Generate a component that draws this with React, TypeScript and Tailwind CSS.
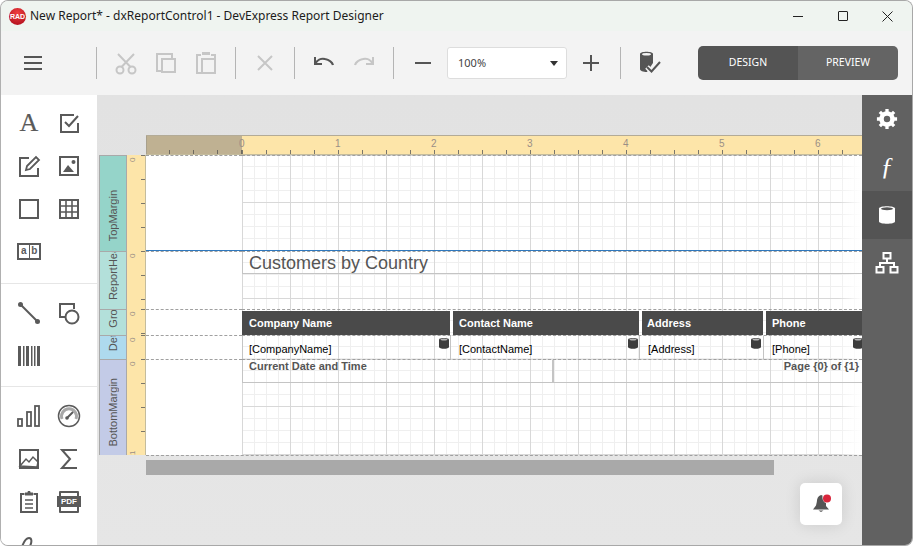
import React from 'react';

const grid =
  'bg-[linear-gradient(270deg,#ffffff,transparent_24px),repeating-linear-gradient(90deg,#d8d8d8_0,#d8d8d8_1px,transparent_1px,transparent_48px),repeating-linear-gradient(180deg,transparent_0,transparent_46px,#d8d8d8_46px,#d8d8d8_47px,transparent_47px,transparent_48px),repeating-linear-gradient(90deg,#efefef_0,#efefef_1px,transparent_1px,transparent_12px),repeating-linear-gradient(180deg,transparent_0,transparent_10px,#efefef_10px,#efefef_11px,transparent_11px,transparent_12px)]';

const Icon: React.FC<{ size?: number; className?: string; children: React.ReactNode }> = ({ size = 24, className = '', children }) => (
  <svg width={size} height={size} viewBox="0 0 24 24" fill="none" stroke="currentColor" strokeWidth={2} className={className}>
    {children}
  </svg>
);

const Sep = () => <div className="w-px h-8 bg-[#b4b4b4] mx-[9px] shrink-0" />;

const ToolBtn: React.FC<{ disabled?: boolean; children: React.ReactNode }> = ({ disabled, children }) => (
  <button className={`w-10 h-10 flex items-center justify-center shrink-0 ${disabled ? 'text-[#c6c6c6]' : 'text-[#555555]'}`}>
    {children}
  </button>
);

const Cell: React.FC<{ children?: React.ReactNode }> = ({ children }) => (
  <div className="w-10 h-[43px] flex items-center justify-center text-[#5a5a5a]">{children}</div>
);

const Db: React.FC<{ className?: string }> = ({ className = '' }) => (
  <svg width="10" height="12" viewBox="0 0 10 12" className={className}>
    <path d="M0 2.5C0 .5 10 .5 10 2.5V10C10 12.4 0 12.4 0 10Z" fill="#3d3d3d" />
    <ellipse cx="5" cy="2.6" rx="3.4" ry="1" fill="#b5b5b5" />
  </svg>
);

const bands = [
  { name: 'TopMargin', h: 'h-[96px]', bg: 'bg-[#95d4c9]', pb: 'pb-[10px]' },
  { name: 'ReportHeader', h: 'h-[58px]', bg: 'bg-[#b3e0da]', pb: 'pb-[9px]' },
  { name: 'GroupHeader', h: 'h-[26px]', bg: 'bg-[#b3e0da]', pb: 'pb-[7px]' },
  { name: 'Detail', h: 'h-[24px]', bg: 'bg-[#aedaee]', pb: 'pb-[8px]' },
  { name: 'BottomMargin', h: 'h-[96px]', bg: 'bg-[#c3cbe7]', pb: 'pb-[9px]' },
];

const BandContent: React.FC<{ name: string }> = ({ name }) => {
  if (name === 'ReportHeader') {
    return (
      <div className="h-[22px] border-b border-[#c4c4c4] border-l pl-[6px] text-[18px] leading-[22px] text-[#555555]">
        Customers by Country
      </div>
    );
  }
  if (name === 'GroupHeader') {
    return (
      <div className="flex gap-[3px] h-[24px] mt-px text-white font-bold text-[11px] leading-[24px]">
        <div className="w-[208px] pl-[7px] bg-[#4a4a4a]">Company Name</div>
        <div className="w-[186px] pl-[6px] bg-[#4a4a4a]">Contact Name</div>
        <div className="w-[121px] pl-[5px] bg-[#4a4a4a]">Address</div>
        <div className="flex-1 pl-[6px] bg-[#4a4a4a]">Phone</div>
      </div>
    );
  }
  if (name === 'Detail') {
    return (
      <div className="flex h-[24px] text-black text-[11px] leading-[13px]">
        <div className="relative w-[209px] pl-[6px] pt-[7px] border-l border-r border-[#c4c4c4]">
          [CompanyName]
          <Db className="absolute right-[1px] top-[1px]" />
        </div>
        <div className="relative w-[189px] pl-[8px] pt-[7px] border-r border-[#c4c4c4]">
          [ContactName]
          <Db className="absolute right-[1px] top-[1px]" />
        </div>
        <div className="relative w-[124px] pl-[8px] pt-[7px] border-r border-[#c4c4c4]">
          [Address]
          <Db className="absolute right-[2px] top-[1px]" />
        </div>
        <div className="relative flex-1 pl-[8px] pt-[7px] overflow-hidden">
          [Phone]
          <Db className="absolute -right-[1px] top-[1px]" />
        </div>
      </div>
    );
  }
  if (name === 'BottomMargin') {
    return (
      <div className="flex h-[23px] border-b border-[#c4c4c4] text-[#555555] font-bold text-[11px] leading-[12px]">
        <div className="w-[312px] pl-[6px] border-l border-[#c4c4c4] border-r-2 border-r-[#c4c4c4]">Current Date and Time</div>
        <div className="flex-1 text-right pr-[3px]">Page {'{0}'} of {'{1}'}</div>
      </div>
    );
  }
  return null;
};

export default function App() {
  return (
    <div className="w-[913px] h-[546px] overflow-hidden rounded-lg border border-[#a8a8a8] border-l-[#b0b0b0] flex flex-col bg-[#f3f3f3] font-['Liberation_Sans',sans-serif]">
      {/* Title bar */}
      <div className="h-[30px] shrink-0 flex items-center bg-[#eff4f0]">
        <div className="ml-2 w-[17px] h-[17px] rounded-full bg-[radial-gradient(circle_at_50%_30%,#f04040,#a80818)] flex items-center justify-center text-white font-bold text-[7px] leading-none">
          RAD
        </div>
        <span className="ml-[4px] font-['Noto_Sans',sans-serif] text-[12px] text-[#1c1c1c]">
          New Report* - dxReportControl1 - DevExpress Report Designer
        </span>
        <div className="ml-auto mr-[2px] flex text-[#222222]">
          <div className="w-[45px] h-[30px] flex items-center justify-center"><div className="w-[10px] h-px bg-[#222222]" /></div>
          <div className="w-[45px] h-[30px] flex items-center justify-center"><div className="w-[10px] h-[10px] border border-[#222222] rounded-[1px]" /></div>
          <div className="w-[45px] h-[30px] flex items-center justify-center">
            <svg width="11" height="11" viewBox="0 0 11 11" stroke="currentColor"><path d="M.5.5l10 10M10.500.5l-10 10" /></svg>
          </div>
        </div>
      </div>

      {/* Toolbar */}
      <div className="h-[64px] shrink-0 flex items-center bg-[#f3f3f3]">
        <div className="ml-3"><ToolBtn>
          <Icon><path d="M3 6h18M3 12h18M3 18h18" /></Icon>
        </ToolBtn></div>
        <div className="ml-[34px] flex items-center">
          <Sep />
          <ToolBtn disabled>
            <Icon>
              <circle cx="6" cy="19" r="3.500" /><circle cx="18" cy="19" r="3.500" />
              <path d="M4 3l12.500 13M20 3L7.500 16" />
            </Icon>
          </ToolBtn>
          <ToolBtn disabled>
            <Icon><path d="M8 20H3V3h15v5" /><rect x="8" y="8" width="13" height="13" /></Icon>
          </ToolBtn>
          <ToolBtn disabled>
            <Icon>
              <path d="M7 4H3v18h4M17 4h4v4" /><rect x="8" y="8" width="13" height="14" /><path d="M8 4h8V1H8z" fill="currentColor" stroke="none" />
            </Icon>
          </ToolBtn>
          <Sep />
          <ToolBtn disabled>
            <Icon><path d="M5 5l14 14M19 5L5 19" /></Icon>
          </ToolBtn>
          <Sep />
          <ToolBtn>
            <Icon size={24}><path d="M3 6v7h7" /><path d="M3 13c2-4 6-6 10-5 4 .8 7 3 8 6" strokeWidth={2.200} /></Icon>
          </ToolBtn>
          <ToolBtn disabled>
            <Icon size={24}><path d="M21 6v7h-7" /><path d="M21 13c-2-4-6-6-10-5-4 .8-7 3-8 6" strokeWidth={2.200} /></Icon>
          </ToolBtn>
          <Sep />
          <ToolBtn>
            <Icon><path d="M4 12h16" /></Icon>
          </ToolBtn>
          <div className="mx-1 w-[120px] h-8 shrink-0 flex items-center justify-between bg-white border border-[#dddddd] rounded-[3px] pl-[10px] pr-[8px] font-['Noto_Sans',sans-serif] text-[11px] text-[#444444]">
            100%
            <svg width="8" height="5" viewBox="0 0 8 5"><path d="M0 0h8L4 5z" fill="#333333" /></svg>
          </div>
          <ToolBtn>
            <Icon><path d="M4 12h16M12 4v16" /></Icon>
          </ToolBtn>
          <Sep />
          <ToolBtn>
            <svg width="26" height="26" viewBox="0 0 26 26">
              <path d="M3 4C3 1 16 1 16 4V13L10 22C6 22 3 21 3 19Z" fill="#555555" />
              <ellipse cx="9.500" cy="4.200" rx="4.500" ry="1.300" fill="#f3f3f3" />
              <path d="M10 17l4.500 4.500L23 12" fill="none" stroke="#f3f3f3" strokeWidth="5" />
              <path d="M10 17l4.500 4.500L23 12" fill="none" stroke="#555555" strokeWidth="2" />
            </svg>
          </ToolBtn>
          <div className="ml-7 flex h-[34px] w-[200px] rounded-[5px] overflow-hidden text-white text-[10.500px] font-['Noto_Sans',sans-serif]">
            <div className="w-[100px] bg-[#545454] flex items-center justify-center">DESIGN</div>
            <div className="w-[100px] bg-[#646464] flex items-center justify-center">PREVIEW</div>
          </div>
        </div>
      </div>

      {/* Main area */}
      <div className="flex-1 min-h-0 flex">
        {/* Toolbox */}
        <div className="w-[96px] shrink-0 bg-white flex flex-col overflow-hidden pt-[6px] pl-2 text-[#5a5a5a]">
          <div className="grid grid-cols-[40px_40px]">
            <Cell><span className="font-['Liberation_Serif',serif] text-[26px] leading-none [-webkit-text-stroke:0.2px_#5a5a5a]">A</span></Cell>
            <Cell>
              <Icon><path d="M21 12v9H4V4h13" /><path d="M8 11l4 4 9-10" /></Icon>
            </Cell>
            <Cell>
              <Icon>
                <path d="M12 4H3v18h18v-8" />
                <path d="M9 16l1-4 9-9 3 3-9 9z" strokeWidth={1.800} />
              </Icon>
            </Cell>
            <Cell>
              <Icon>
                <rect x="3" y="3" width="18" height="18" />
                <path d="M6 18l5-7 6 7z" fill="currentColor" stroke="none" />
                <circle cx="16.500" cy="8" r="2" fill="currentColor" stroke="none" />
              </Icon>
            </Cell>
            <Cell><Icon><rect x="3" y="3" width="18" height="18" /></Icon></Cell>
            <Cell>
              <Icon><rect x="3" y="3" width="18" height="18" /><path d="M9 3v18M15 3v18M3 9h18M3 15h18" strokeWidth={1.600} /></Icon>
            </Cell>
            <Cell>
              <div className="w-6 h-[17px] flex border-2 border-[#5a5a5a] text-[10px] leading-[12px] font-bold text-center">
                <span className="flex-1 border-r border-[#5a5a5a]">a</span>
                <span className="flex-1">b</span>
              </div>
            </Cell>
          </div>
          <div className="h-px bg-[#e6e6e6] -ml-2 mt-[10px] mb-[7px] shrink-0" />
          <div className="grid grid-cols-[40px_40px]">
            <Cell>
              <Icon><path d="M3 3l18 18" /><circle cx="3.500" cy="3.500" r="1.500" fill="currentColor" /><circle cx="20.500" cy="20.500" r="1.500" fill="currentColor" /></Icon>
            </Cell>
            <Cell>
              <Icon><path d="M8 16H3V3h14v5" /><circle cx="15" cy="16" r="6.500" /></Icon>
            </Cell>
            <Cell>
              <svg width="24" height="24" viewBox="0 0 24 24" fill="currentColor">
                <path d="M1 2h3v20H1zM6 2h1.500v20H6zM9 2h3v20H9zM14 2h1.500v20H14zM17 2h1.500v20H17zM20 2h3v20h-3z" />
              </svg>
            </Cell>
          </div>
          <div className="h-px bg-[#e6e6e6] -ml-2 mt-[9px] mb-[7px] shrink-0" />
          <div className="grid grid-cols-[40px_40px]">
            <Cell>
              <Icon>
                <rect x="1" y="15" width="4" height="7" strokeWidth={1.800} />
                <rect x="10" y="8" width="4" height="14" strokeWidth={1.800} />
                <rect x="18" y="2" width="4" height="20" strokeWidth={1.800} />
              </Icon>
            </Cell>
            <Cell>
              <Icon>
                <circle cx="12" cy="12" r="10.500" strokeWidth={1.500} />
                <path d="M5 15a7.500 7.500 0 1 1 14 0" strokeWidth={3} stroke="#a8a8a8" />
                <path d="M10 14l6-6" strokeWidth={2} />
                <circle cx="10" cy="14" r="1.800" fill="currentColor" stroke="none" />
              </Icon>
            </Cell>
            <Cell>
              <Icon><rect x="3" y="3" width="18" height="18" /><path d="M3 19l6-7 3 3 4-5 5 5-1 5z" strokeWidth={1.500} /></Icon>
            </Cell>
            <Cell>
              <Icon><path d="M20 3H5l8 9-8 9h15" /></Icon>
            </Cell>
            <Cell>
              <Icon>
                <path d="M7 4H4v18h16V4h-3" /><path d="M8 5V3h3V1.500h2V3h3v2z" fill="currentColor" strokeWidth={1} />
                <path d="M8 10h8M8 14h8M8 18h8" strokeWidth={1.600} />
              </Icon>
            </Cell>
            <Cell>
              <div className="relative w-[22px] h-[22px] flex items-center">
                <div className="absolute inset-x-[1px] inset-y-0 border-2 border-[#5a5a5a] rounded-[1px]" />
                <div className="relative -mx-[1px] w-6 h-[11px] bg-[#5a5a5a] text-white text-[8px] leading-[11px] font-bold text-center">PDF</div>
              </div>
            </Cell>
            <Cell>
              <Icon><path d="M3 26c0-9 4-21 9-21 3 0 3 4 1 8" /></Icon>
            </Cell>
          </div>
        </div>

        {/* Design surface */}
        <div className="relative flex-1 min-w-0 overflow-hidden bg-gradient-to-b from-[#e2e2e2] to-[#e6e6e6] pt-[40px] pl-[2px]">
          {/* Top ruler */}
          <div className="ml-[47px] flex h-[20px] w-[716px] border-t border-[#b3ab97] border-b border-b-[#c4bc9d]">
            <div className="relative w-[96px] bg-[#bfb192] shrink-0 border-l border-[#a8a08c]">
              <div className="absolute bottom-0 inset-x-0 h-[4px] bg-[repeating-linear-gradient(90deg,transparent_0,transparent_22px,#6e6a60_22px,#6e6a60_23px,transparent_23px,transparent_24px)]" />
            </div>
            <div className="relative flex-1 bg-[#fde5a9] flex">
              <div className="absolute bottom-0 inset-x-0 h-[4px] bg-[repeating-linear-gradient(90deg,#7a766a_0,#7a766a_1px,transparent_1px,transparent_24px)]" />
              {[0, 1, 2, 3, 4, 5, 6].map((n) => (
                <div key={n} className={`${n === 6 ? 'w-[44px]' : 'w-[96px]'} shrink-0 text-[10px] leading-[16px] text-[#9a8f86]`}>
                  <span className="-ml-[3px]">{n}</span>
                </div>
              ))}
            </div>
          </div>

          {/* Bands */}
          {bands.map((b) => (
            <div key={b.name} className={`flex w-[763px] ${b.h}`}>
              <div className={`w-[28px] shrink-0 border-x border-t border-[#a9a9a9] overflow-hidden flex justify-center items-end ${b.bg} ${b.pb}`}>
                <span className="[writing-mode:vertical-rl] rotate-180 text-[11px] leading-none text-[#555555] whitespace-nowrap">
                  {b.name}
                </span>
              </div>
              <div className="relative w-[19px] shrink-0 bg-[#fde5a9] border-r border-[#c4bc9d]">
                <div className="absolute right-0 top-0 bottom-0 w-[4px] bg-[repeating-linear-gradient(180deg,#7a766a_0,#7a766a_1px,transparent_1px,transparent_24px)]" />
                <span className="block -rotate-90 w-[10px] ml-[1px] -mt-[3px] text-[8px] leading-[10px] text-[#9a8f86]">0</span>
                {b.name === 'BottomMargin' && (
                  <span className="absolute left-[1px] bottom-0 block -rotate-90 w-[10px] text-[8px] leading-[10px] text-[#9a8f86]">1</span>
                )}
              </div>
              <div className="w-[96px] shrink-0 bg-white border-t border-dashed border-[#a0a0a0]" />
              <div className={`relative w-[620px] shrink-0 bg-white border-t border-dashed border-[#a0a0a0] ${grid}`}>
                <BandContent name={b.name} />
              </div>
              {b.name === 'ReportHeader' && (
                <div className="absolute left-[49px] mt-[-1px] w-[716px] h-px bg-[#2f78bd]" />
              )}
            </div>
          ))}
          <div className="ml-[47px] w-[716px] border-t border-dashed border-[#a0a0a0]" />

          {/* Scrollbar */}
          <div className="ml-[47px] mt-[4px] w-[628px] h-[15px] bg-[#a9a9a9]" />

          {/* Notification button */}
          <div className="absolute left-[703px] top-[388px] w-[42px] h-[42px] rounded-[5px] bg-white shadow-[0_0_16px_rgba(0,0,0,0.12)] flex items-center justify-center">
            <svg width="20" height="20" viewBox="0 0 20 20">
              <path d="M10 1C7 2 6 4.500 5.800 8L5 11.500 2 15.500H18L15 12V9C13 8.500 11 6 11.500 1.500Z" fill="#555555" />
              <path d="M7.500 16.500h5L10 18z" fill="#555555" />
              <circle cx="16" cy="4.500" r="4" fill="#d8263c" />
            </svg>
          </div>
        </div>

        {/* Right panel */}
        <div className="w-[50px] shrink-0 bg-[#616161] text-white flex flex-col">
          <div className="h-[48px] flex items-center justify-center">
            <svg width="22" height="22" viewBox="0 0 24 24" fill="none" stroke="white">
              <circle cx="12" cy="12" r="6" strokeWidth={5} />
              <path d="M12 1v4M12 19v4M1 12h4M19 12h4M4.200 4.200l2.800 2.800M17 17l2.800 2.800M19.800 4.200L17 7M7 17l-2.800 2.800" strokeWidth={3.600} />
            </svg>
          </div>
          <div className="h-[48px] flex items-center justify-center font-['Liberation_Serif',serif] italic text-[26px] leading-none">ƒ</div>
          <div className="h-[48px] flex items-center justify-center bg-[#545454]">
            <svg width="18" height="20" viewBox="0 0 18 20">
              <path d="M1 3.500C1 .5 17 .5 17 3.500V16.500C17 19.500 1 19.500 1 16.500Z" fill="white" />
              <ellipse cx="9" cy="3.800" rx="6" ry="1.500" fill="#545454" />
            </svg>
          </div>
          <div className="h-[48px] flex items-center justify-center">
            <Icon>
              <rect x="8.500" y="2" width="7" height="5.500" />
              <rect x="1.500" y="16" width="7" height="5.500" />
              <rect x="15.500" y="16" width="7" height="5.500" />
              <path d="M12 7.500V12M5 16v-4h14v4" />
            </Icon>
          </div>
        </div>
      </div>
    </div>
  );
}
